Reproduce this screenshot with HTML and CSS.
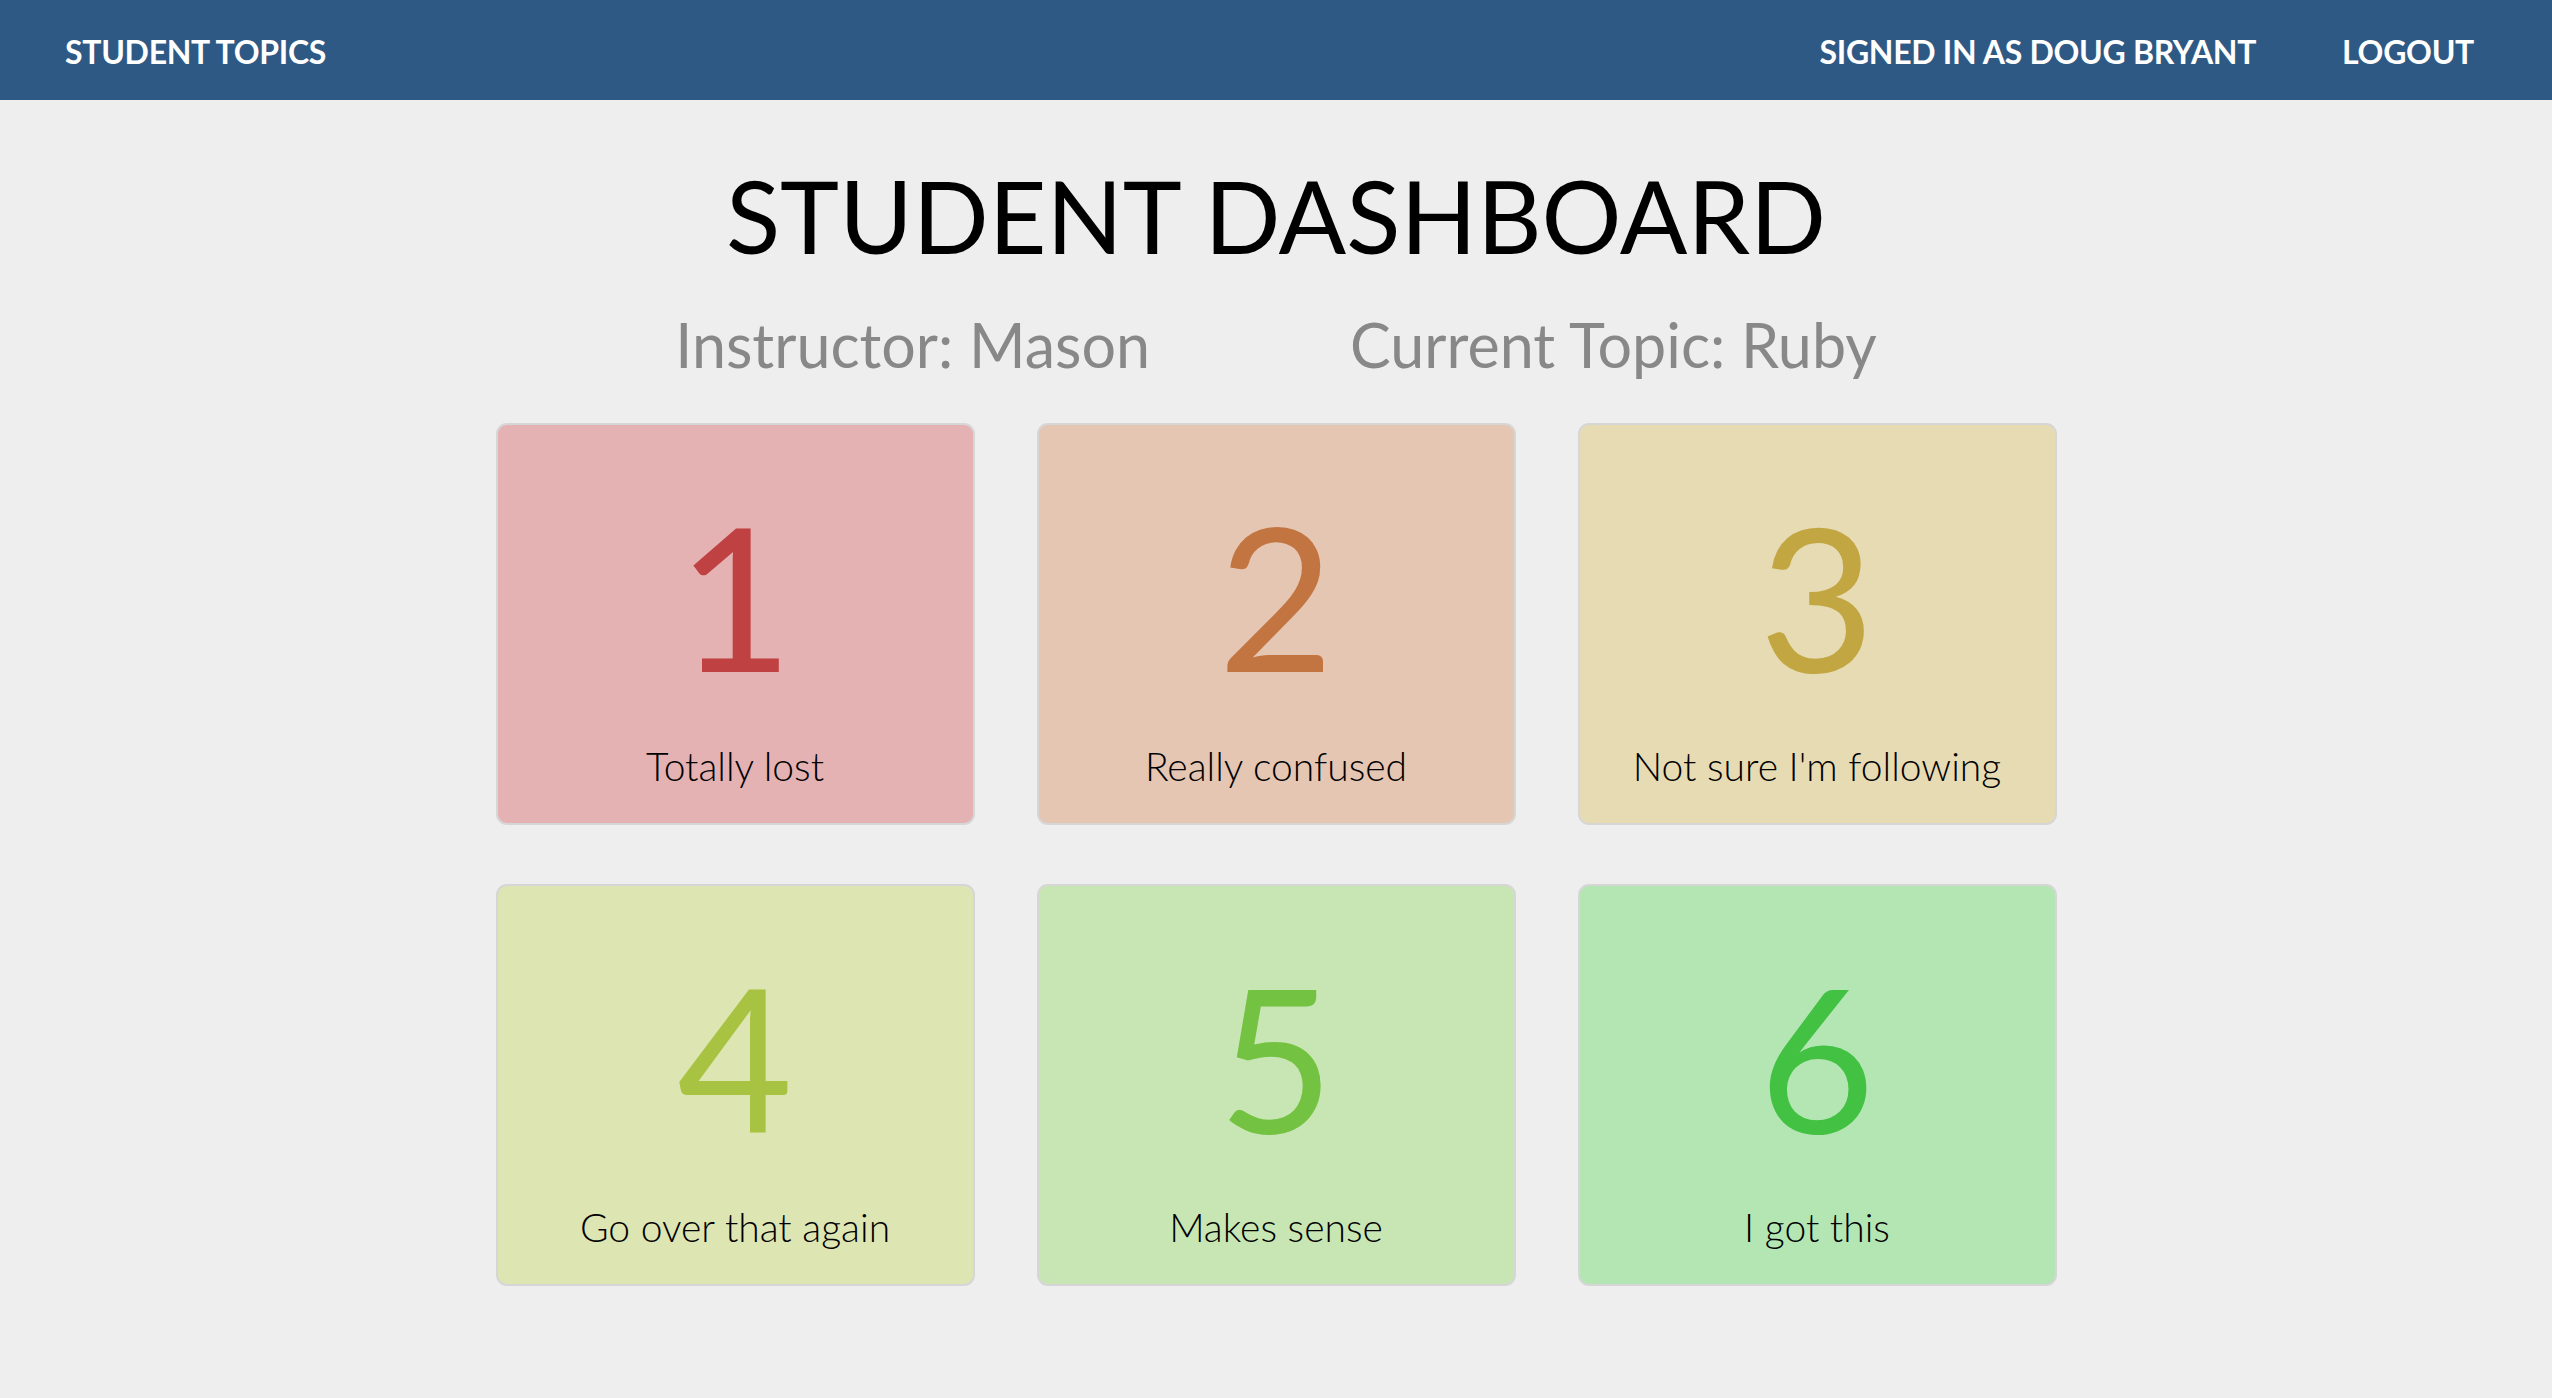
FILE: index.html
```html
<!DOCTYPE html>
<html lang="en">
<head>
<meta charset="utf-8">
<title>Student Dashboard</title>
<link rel="stylesheet" href="styles.css">
</head>
<body>
<header class="navbar">
  <a class="brand" href="#">STUDENT TOPICS</a>
  <nav class="nav-right">
    <a class="nav-link" href="#">SIGNED IN AS DOUG BRYANT</a>
    <a class="nav-link" href="#">LOGOUT</a>
  </nav>
</header>
<main class="dashboard">
  <h1 class="title">STUDENT DASHBOARD</h1>
  <div class="meta">
    <span class="meta-item">Instructor: Mason</span>
    <span class="meta-item">Current Topic: Ruby</span>
  </div>
  <div class="grid">
    <div class="card c1"><div class="num">1</div><div class="label">Totally lost</div></div>
    <div class="card c2"><div class="num">2</div><div class="label">Really confused</div></div>
    <div class="card c3"><div class="num">3</div><div class="label">Not sure I'm following</div></div>
    <div class="card c4"><div class="num">4</div><div class="label">Go over that again</div></div>
    <div class="card c5"><div class="num">5</div><div class="label">Makes sense</div></div>
    <div class="card c6"><div class="num">6</div><div class="label">I got this</div></div>
  </div>
</main>
</body>
</html>
```
FILE: styles.css
```css
* { box-sizing: border-box; }
html, body { margin: 0; padding: 0; }
body {
  background: #eeeeee;
  font-family: Lato, "Open Sans", "Liberation Sans", sans-serif;
  color: #000;
}
.navbar {
  height: 100px;
  background: #2e5984;
  display: flex;
  align-items: center;
  justify-content: space-between;
  padding: 4px 78px 0 65px;
}
.brand, .nav-link {
  color: #fff;
  text-decoration: none;
  font-weight: 700;
  font-size: 32px;
  line-height: 1;
  letter-spacing: -0.3px;
}
.nav-right {
  display: flex;
  gap: 86px;
}
.dashboard {
  display: flex;
  flex-direction: column;
  align-items: center;
}
.title {
  margin: 65px 0 0;
  font-size: 100px;
  line-height: 100px;
  font-weight: 400;
  color: #000;
}
.meta {
  margin-top: 50px;
  display: flex;
  gap: 200px;
  font-size: 61px;
  line-height: 60px;
  color: #888888;
}
.grid {
  margin-top: 48px;
  display: grid;
  grid-template-columns: repeat(3, 479px);
  column-gap: 62px;
  row-gap: 59px;
}
.card {
  height: 402px;
  border: 2px solid #d6d6d6;
  border-radius: 11px;
  padding-top: 70px;
  display: flex;
  flex-direction: column;
  align-items: center;
  gap: 51px;
}
.num {
  font-size: 200px;
  line-height: 200px;
}
.label {
  font-size: 39px;
  line-height: 40px;
  font-weight: 300;
}
.c1 { background: #e4b2b2; } .c1 .num { color: #c04141; }
.c2 { background: #e5c6b2; } .c2 .num { color: #c37541; }
.c3 { background: #e7dbb3; } .c3 .num { color: #c2a641; }
.c4 { background: #dde6b3; } .c4 .num { color: #a8c241; }
.c5 { background: #c8e6b3; } .c5 .num { color: #73c241; }
.c6 { background: #b4e6b4; } .c6 .num { color: #42c142; }
```
